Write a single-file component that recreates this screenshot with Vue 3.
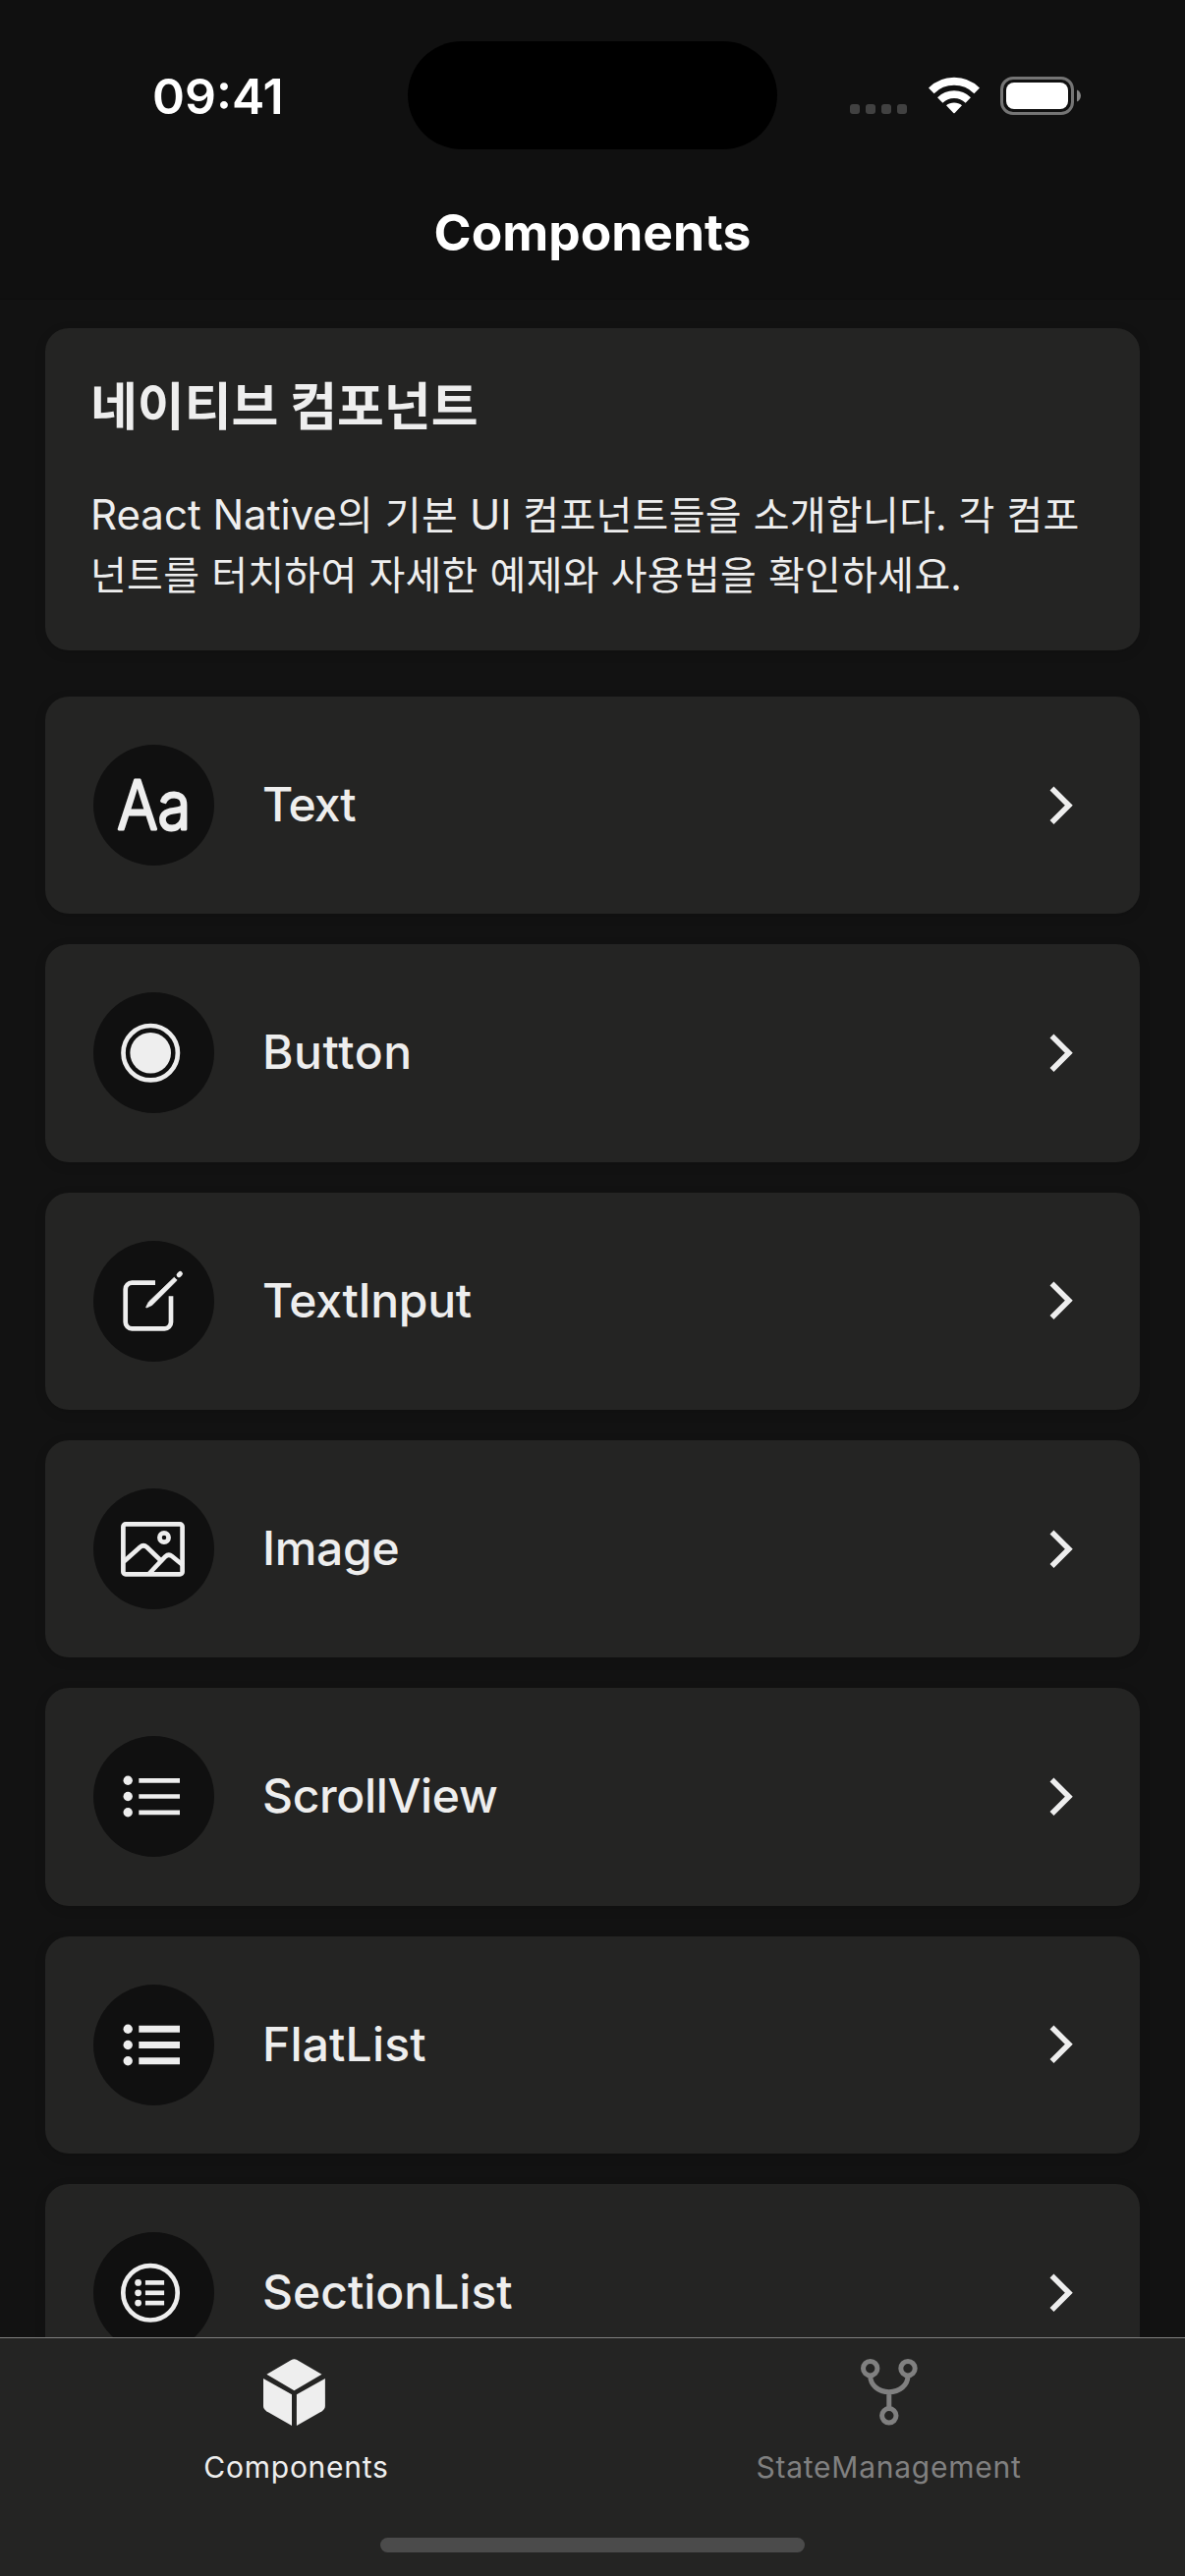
<script setup>
const items = [
  { name: 'Text', icon: 'text', tracking: -1 },
  { name: 'Button', icon: 'button', tracking: 0.6 },
  { name: 'TextInput', icon: 'input', tracking: -0.3 },
  { name: 'Image', icon: 'image', tracking: -0.3 },
  { name: 'ScrollView', icon: 'scroll', tracking: -0.35 },
  { name: 'FlatList', icon: 'flat', tracking: 0.15 },
  { name: 'SectionList', icon: 'section', tracking: 0 },
]
const rows = [45.3, 61.5, 77.8]
</script>

<template>
  <div class="screen">
    <header class="header">
      <div class="status">
        <div class="time">09:41</div>
        <div class="island"></div>
        <div class="indicators">
          <div class="signal"><i v-for="n in 4" :key="n"></i></div>
          <svg class="wifi" width="52" height="38" viewBox="0 0 52 38">
            <g fill="none" stroke="#fff">
              <path d="M2.8 14.4A33 33 0 0 1 49.2 14.4" stroke-width="8" />
              <path d="M11.7 24A20.4 20.4 0 0 1 40.3 24" stroke-width="7.6" />
            </g>
            <path d="M18 29.3C22.4 25.6 29.6 25.6 34 29.3L26.7 36.9Q26 37.5 25.3 36.9Z" fill="#fff" />
          </svg>
          <svg class="battery" width="83" height="39" viewBox="0 0 83 39">
            <rect x="1.5" y="1.5" width="72" height="36" rx="11.5" fill="none" stroke="#757575" stroke-width="3" />
            <rect x="6" y="6" width="63" height="27" rx="8" fill="#fff" />
            <path d="M78 13.5C83.3 15.5 83.3 23.5 78 25.5Z" fill="#858585" />
          </svg>
        </div>
      </div>
      <h1 class="title">Components</h1>
    </header>

    <main class="content">
      <section class="intro">
        <h2>네이티브 컴포넌트</h2>
        <p>
          <span class="line"><span class="latin">React Native</span>의 기본 <span class="latin">UI</span> 컴포넌트들을 소개합니다. 각 컴포</span>
          <span class="line">넌트를 터치하여 자세한 예제와 사용법을 확인하세요.</span>
        </p>
      </section>

      <ul class="list">
        <li v-for="item in items" :key="item.name" class="card">
          <div class="badge">
            <svg width="123" height="123" viewBox="0 0 123 123" fill="none" stroke="#eee" stroke-width="4.7">
              <text
                v-if="item.icon === 'text'"
                class="glyphs"
                x="24.3"
                y="86.2"
                textLength="75"
                lengthAdjust="spacingAndGlyphs"
              >Aa</text>
              <template v-else-if="item.icon === 'button'">
                <circle cx="58.2" cy="61.7" r="27.7" />
                <circle cx="58.2" cy="61.7" r="20.8" fill="#eee" stroke="none" />
              </template>
              <template v-else-if="item.icon === 'input'">
                <path d="M63 42.7H39.2a6.5 6.5 0 0 0-6.5 6.5V82.8a6.5 6.5 0 0 0 6.5 6.5H72.5a6.5 6.5 0 0 0 6.5-6.5V56.3" />
                <path d="M82.3 37.2L85.2 40.1L60.3 64.9Q59.5 65.7 58.5 66.1L54 68.1Q53.5 68 53.7 67.5L55.8 63.2Q56.2 62.2 57 61.5Z" fill="#eee" stroke="#eee" stroke-width="0.8" />
                <path d="M87.1 34.7L88.4 33.4" stroke-width="5" stroke-linecap="round" />
              </template>
              <template v-else-if="item.icon === 'image'">
                <rect x="30.4" y="36.4" width="60.2" height="51" rx="2.5" />
                <circle cx="72" cy="50" r="4.6" />
                <path d="M31 74.5L47.5 59.7Q51 56.8 54.5 59.7L68 72.7" />
                <path d="M56.5 87L73.2 69.5Q76.6 66.3 80 69L91 78" />
              </template>
              <template v-else-if="item.icon === 'section'">
                <circle cx="58" cy="61.8" r="27.7" />
                <template v-for="y in [51.4, 61.8, 72.1]" :key="y">
                  <circle cx="45.6" :cy="y" r="3.4" fill="#eee" stroke="none" />
                  <path :d="`M52.9 ${y}H72.1`" />
                </template>
              </template>
              <template v-else>
                <template v-for="y in rows" :key="y">
                  <circle cx="35.2" :cy="y" r="4.7" fill="#eee" stroke="none" />
                  <path :d="`M46.3 ${y}H88`" :stroke-width="item.icon === 'flat' ? 7 : 4.7" />
                </template>
              </template>
            </svg>
          </div>
          <span class="label" :style="{ letterSpacing: item.tracking + 'px' }">{{ item.name }}</span>
          <svg class="chevron" width="24" height="40" viewBox="0 0 24 40">
            <path d="M2.5 2.5L19.8 19.8L2.5 37.1" fill="none" stroke="#eee" stroke-width="5.6" />
          </svg>
        </li>
      </ul>
    </main>

    <nav class="tabs">
      <div class="tab active">
        <svg class="cube" width="63" height="68" viewBox="0 0 63 68" fill="#eee">
          <path d="M28.6 1.1Q31.4-.6 34.2 1.1L59.5 15.7L31.4 32.3L3.4 15.7Z" />
          <path d="M0 20L29 36.3V67.9L3.2 53.2Q0 51.3 0 47.8Z" />
          <path d="M62.9 20L33.9 36.3V67.9L59.7 53.2Q62.9 51.3 62.9 47.8Z" />
        </svg>
        <span class="caption">Components</span>
      </div>
      <div class="tab">
        <svg width="58" height="68" viewBox="0 0 58 68" fill="none" stroke="#808080" stroke-width="5">
          <circle cx="9.7" cy="9.7" r="7.2" />
          <circle cx="48" cy="9.7" r="7.2" />
          <circle cx="28.8" cy="57.8" r="7.2" />
          <path d="M9.7 17C9.7 26.7 18 33.7 28.8 33.7S48 26.7 48 17M28.8 33.7V51" />
        </svg>
        <span class="caption">StateManagement</span>
      </div>
      <div class="home"></div>
    </nav>
  </div>
</template>

<style>
body {
  margin: 0;
  background: #121212;
}
</style>

<style scoped>
.screen {
  width: 1206px;
  height: 2622px;
  display: flex;
  flex-direction: column;
  overflow: hidden;
  background: #121212;
  color: #eee;
  font-family: Inter, "Noto Sans CJK KR", sans-serif;
}
.header {
  box-sizing: border-box;
  flex: none;
  height: 305px;
  background: #101010;
  border-bottom: 1px solid #0e0e0e;
  color: #fff;
}
.status {
  display: grid;
  grid-template-columns: 415px 376px 1fr;
  grid-template-rows: 110px;
  padding-top: 42px;
}
.time {
  padding-left: 155px;
  font-size: 50px;
  font-weight: 600;
  line-height: 112px;
}
.island {
  border-radius: 55px;
  background: #000;
}
.indicators {
  display: flex;
  align-items: flex-start;
  padding: 36px 0 0 74px;
}
.signal {
  display: flex;
  gap: 6px;
  margin-top: 28px;
}
.signal i {
  width: 10px;
  height: 10px;
  border-radius: 3px;
  background: #414141;
}
.wifi {
  margin: 0 21px 0 22px;
}
.title {
  margin: 0;
  padding-top: 54px;
  font-size: 51.5px;
  font-weight: 680;
  line-height: 60px;
  text-align: center;
}
.content {
  flex: 1;
  min-height: 0;
  overflow: hidden;
  padding: 29px 46px 0;
}
.intro {
  box-sizing: border-box;
  height: 328px;
  margin-bottom: 47px;
  padding: 44px 46px 0;
  border-radius: 24px;
  background: #242423;
  box-shadow: 0 3px 12px rgba(0, 0, 0, 0.12);
}
.intro h2 {
  margin: 0;
  font-family: "Noto Sans CJK KR", sans-serif;
  font-size: 52px;
  font-weight: 700;
  line-height: 66px;
}
.intro p {
  margin: 48px 0 0;
  font-family: "Noto Sans CJK KR", sans-serif;
  font-size: 40px;
  line-height: 61px;
  letter-spacing: 0.3px;
  word-spacing: 2.6px;
}
.line {
  display: block;
  white-space: nowrap;
}
.latin {
  font-family: Inter, sans-serif;
  font-size: 42px;
  line-height: 1;
  letter-spacing: 0;
  word-spacing: 0;
}
.list {
  margin: 0;
  padding: 0;
  list-style: none;
}
.card {
  display: flex;
  align-items: center;
  box-sizing: border-box;
  height: 221.33px;
  margin-bottom: 31px;
  padding: 0 68px 0 49px;
  border-radius: 24px;
  background: #242423;
  box-shadow: 0 3px 12px rgba(0, 0, 0, 0.12);
}
.badge {
  width: 123px;
  height: 123px;
  border-radius: 50%;
  background: #101010;
}
.badge svg {
  display: block;
}
.glyphs {
  font-size: 68px;
  font-weight: 300;
  fill: #eee;
  stroke-width: 2.8px;
  stroke-linejoin: round;
}
.label {
  flex: 1;
  margin-left: 49px;
  padding-bottom: 1px;
  font-size: 48px;
  font-weight: 500;
  line-height: 60px;
}
.tabs {
  box-sizing: border-box;
  flex: none;
  height: 243px;
  display: grid;
  grid-template-columns: 1fr 1fr;
  grid-template-rows: 203px 15px;
  justify-items: center;
  border-top: 1px solid #808080;
  background: #242423;
}
.tab {
  display: flex;
  flex-direction: column;
  align-items: center;
  padding-top: 21px;
  color: #808080;
}
.tab.active {
  color: #eee;
}
.cube {
  margin-right: 5px;
}
.caption {
  margin-top: 22px;
  font-size: 30px;
  line-height: 40px;
  letter-spacing: 0.75px;
}
.home {
  grid-column: 1 / 3;
  width: 432px;
  border-radius: 8px;
  background: #4b4b4b;
}
</style>
